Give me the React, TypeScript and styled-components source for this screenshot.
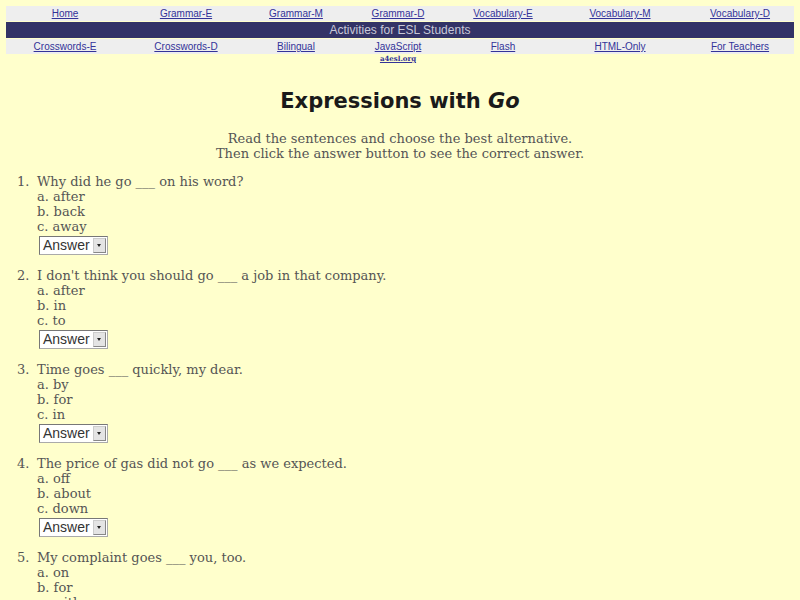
import React from 'react';
import styled, { createGlobalStyle } from 'styled-components';

const GlobalStyle = createGlobalStyle`
  html, body {
    margin: 0;
    padding: 0;
    background: #ffffcc;
  }
`;

const SPage = styled.div`
  padding: 6px 6px 0;
  font-family: 'DejaVu Serif', serif;
  color: #555555;
`;

const SNavRow = styled.div`
  display: grid;
  grid-template-columns: 118px 124px 96px 108px 102px 132px 108px;
  background: #eeeeee;
  height: 15px;
  align-items: center;
`;

const SNavCell = styled.div`
  text-align: center;
  font-family: 'Liberation Sans', Arial, sans-serif;
  font-size: 10px;
  line-height: 15px;
`;

const SNavLink = styled.a`
  color: #333399;
  text-decoration: underline;
`;

const SBand = styled.div`
  background: #333366;
  color: #c8c8d8;
  height: 16px;
  margin: 1px 0;
  text-align: center;
  font-family: 'Liberation Sans', Arial, sans-serif;
  font-size: 12px;
  line-height: 16px;
`;

const SSubRow = styled.div`
  display: grid;
  grid-template-columns: 118px 124px 96px 108px 102px 132px 108px;
  height: 11px;
`;

const STiny = styled.a`
  grid-column: 4;
  text-align: center;
  font-family: 'DejaVu Serif', serif;
  font-weight: bold;
  font-size: 7px;
  line-height: 10px;
  color: #333399;
  text-decoration: underline;
`;

const STitle = styled.h1`
  margin: 21px 0 0;
  text-align: center;
  font-family: 'Comic Sans MS', 'DejaVu Sans', sans-serif;
  font-weight: bold;
  font-size: 21px;
  line-height: 30px;
  color: #1a1a1a;

  & em {
    font-style: italic;
  }
`;

const SIntro = styled.p`
  margin: 15px 0 0;
  text-align: center;
  font-size: 13px;
  line-height: 15px;
`;

const SList = styled.div`
  margin-top: 13px;
  display: flex;
  flex-direction: column;
  gap: 13px;
  font-size: 13px;
  line-height: 15px;
`;

const SItem = styled.div`
  display: grid;
  grid-template-columns: 31px 1fr;
`;

const SNum = styled.span`
  padding-left: 11px;
`;

const SBody = styled.div`
  display: flex;
  flex-direction: column;
  align-items: flex-start;
`;

const SSelect = styled.div`
  margin: 2px 0 0 2px;
  display: flex;
  align-items: stretch;
  height: 17px;
  background: #ffffff;
  border: 1px solid #aaaaaa;
  border-top-color: #777777;
  border-left-color: #777777;
  font-family: 'Liberation Sans', Arial, sans-serif;
  font-size: 14px;
  line-height: 17px;
  color: #333333;
`;

const SSelectText = styled.span`
  padding: 0 3px 0 3px;
`;

const SArrow = styled.span`
  width: 11px;
  margin: 1px 1px 1px 0;
  background: #e4e4e4;
  border: 1px solid #cccccc;
  border-right-color: #888888;
  border-bottom-color: #888888;
  display: flex;
  align-items: center;
  justify-content: center;

  &::after {
    content: '';
    border-left: 2px solid transparent;
    border-right: 2px solid transparent;
    border-top: 3px solid #222222;
  }
`;

const topLinks = ['Home', 'Grammar-E', 'Grammar-M', 'Grammar-D', 'Vocabulary-E', 'Vocabulary-M', 'Vocabulary-D'];
const bottomLinks = ['Crosswords-E', 'Crosswords-D', 'Bilingual', 'JavaScript', 'Flash', 'HTML-Only', 'For Teachers'];

const questions = [
  { q: 'Why did he go ___ on his word?', opts: ['after', 'back', 'away'] },
  { q: "I don't think you should go ___ a job in that company.", opts: ['after', 'in', 'to'] },
  { q: 'Time goes ___ quickly, my dear.', opts: ['by', 'for', 'in'] },
  { q: 'The price of gas did not go ___ as we expected.', opts: ['off', 'about', 'down'] },
  { q: 'My complaint goes ___ you, too.', opts: ['on', 'for', 'with'] },
];

const letters = ['a', 'b', 'c'];

const App = () => (
  <>
    <GlobalStyle />
    <SPage>
      <SNavRow>
        {topLinks.map(l => (
          <SNavCell key={l}>
            <SNavLink href="#">{l}</SNavLink>
          </SNavCell>
        ))}
      </SNavRow>
      <SBand>{'Activities for ESL Students'}</SBand>
      <SNavRow>
        {bottomLinks.map(l => (
          <SNavCell key={l}>
            <SNavLink href="#">{l}</SNavLink>
          </SNavCell>
        ))}
      </SNavRow>
      <SSubRow>
        <STiny href="#">{'a4esl.org'}</STiny>
      </SSubRow>

      <STitle>
        {'Expressions with '}
        <em>{'Go'}</em>
      </STitle>
      <SIntro>
        {'Read the sentences and choose the best alternative.'}
        <br />
        {'Then click the answer button to see the correct answer.'}
      </SIntro>

      <SList>
        {questions.map((item, i) => (
          <SItem key={i}>
            <SNum>{`${i + 1}.`}</SNum>
            <SBody>
              <span>{item.q}</span>
              {item.opts.map((o, j) => (
                <span key={o}>{`${letters[j]}. ${o}`}</span>
              ))}
              <SSelect>
                <SSelectText>{'Answer'}</SSelectText>
                <SArrow />
              </SSelect>
            </SBody>
          </SItem>
        ))}
      </SList>
    </SPage>
  </>
);

export default App;
